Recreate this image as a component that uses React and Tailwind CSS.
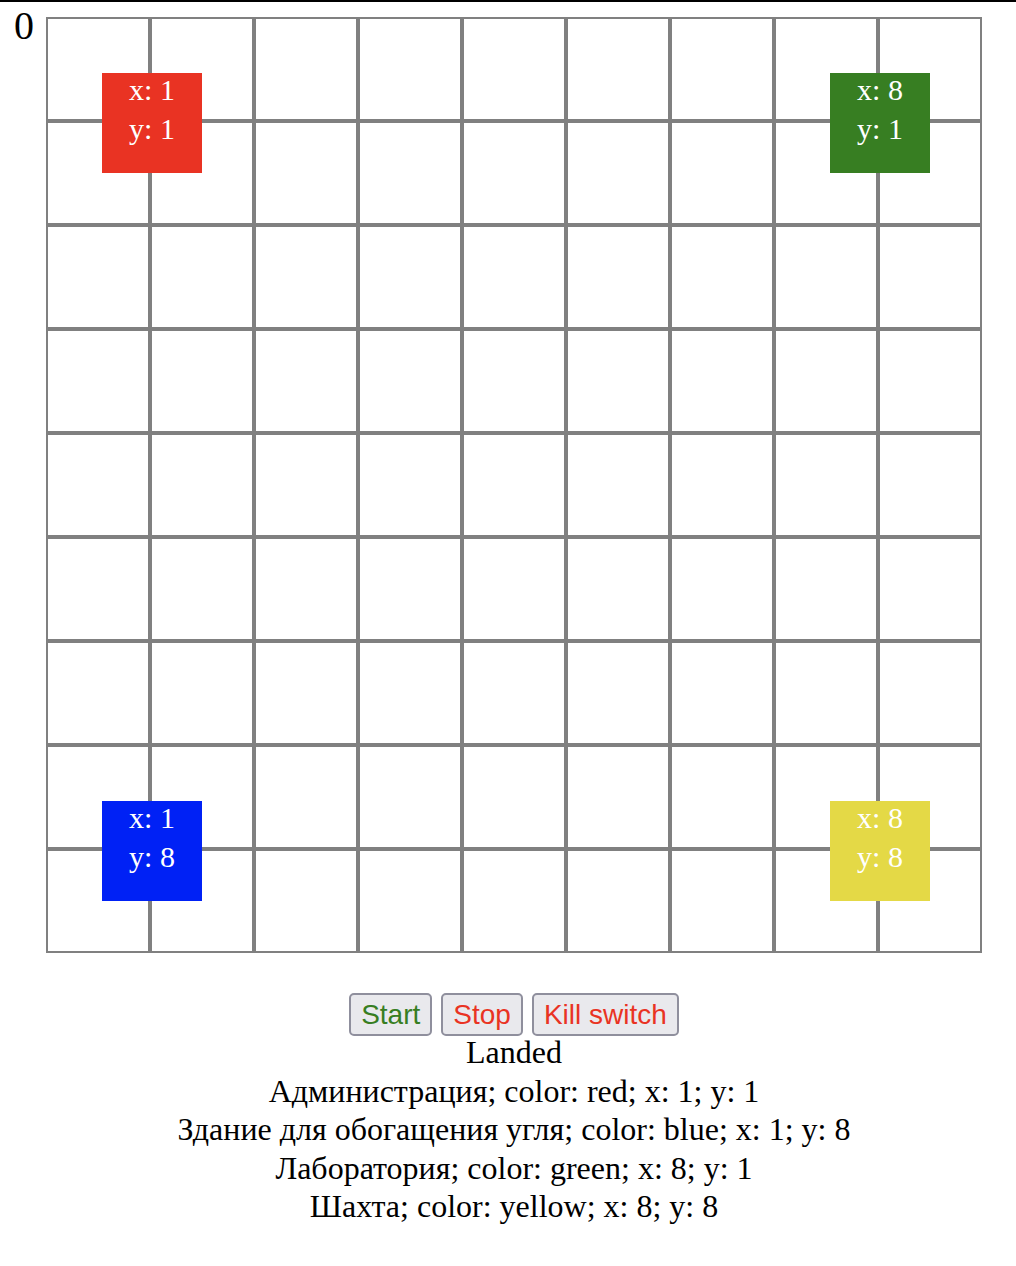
import React from 'react'

const SIZE = 9

// buildings on the field: cell coords are 1-based, drawn centred on grid crossings
const BUILDINGS = [
  { name: 'Администрация', color: 'red', x: 1, y: 1, bg: 'bg-[#e93323]', pos: 'left-[56px] top-[56px]' },
  { name: 'Здание для обогащения угля', color: 'blue', x: 1, y: 8, bg: 'bg-[#0021f5]', pos: 'left-[56px] top-[784px]' },
  { name: 'Лаборатория', color: 'green', x: 8, y: 1, bg: 'bg-[#377e22]', pos: 'left-[784px] top-[56px]' },
  { name: 'Шахта', color: 'yellow', x: 8, y: 8, bg: 'bg-[#e4d946]', pos: 'left-[784px] top-[784px]' },
]

const serif = { fontFamily: '"Liberation Serif", "Times New Roman", serif' }

function Field() {
  const cells = []
  for (let i = 0; i < SIZE * SIZE; i++) {
    cells.push(<div key={i} className="w-[104px] h-[104px] border-2 border-[#808080]" />)
  }
  return (
    <div className="relative w-[936px] h-[936px]">
      <div className="grid grid-cols-[repeat(9,104px)]">{cells}</div>
      {BUILDINGS.map((b) => (
        <div
          key={b.name}
          className={`absolute ${b.pos} ${b.bg} w-[100px] h-[100px] text-white text-center text-[30px] leading-[39px]`}
        >
          <div className="-mt-[3px]">x: {b.x}</div>
          <div>y: {b.y}</div>
        </div>
      ))}
    </div>
  )
}

function Btn({ children, color }) {
  return (
    <button
      className={`h-[43px] px-[10px] rounded-[5px] border-2 border-[#8f8f9d] bg-[#e9e9ed] text-[28px] leading-none ${color}`}
      style={{ fontFamily: '"Liberation Sans", Arial, sans-serif' }}
    >
      {children}
    </button>
  )
}

export default function App() {
  return (
    <div className="bg-white min-h-[1266px] border-t-2 border-black" style={serif}>
      <div className="flex items-start pl-[14px]">
        <div className="w-[32px] mt-[4px] text-[40px] leading-none text-black">0</div>
        <div className="mt-[15px] w-[936px]">
          <Field />
          <div className="mt-[40px] flex justify-center gap-[9px]">
            <Btn color="text-[#377e22]">Start</Btn>
            <Btn color="text-[#e93323]">Stop</Btn>
            <Btn color="text-[#e93323]">Kill switch</Btn>
          </div>
          <div className="-mt-[3px] text-center text-black text-[32px] leading-[38.5px]">
            <div>Landed</div>
            {BUILDINGS.map((b) => (
              <div key={b.name}>
                {b.name}; color: {b.color}; x: {b.x}; y: {b.y}
              </div>
            ))}
          </div>
        </div>
      </div>
    </div>
  )
}
